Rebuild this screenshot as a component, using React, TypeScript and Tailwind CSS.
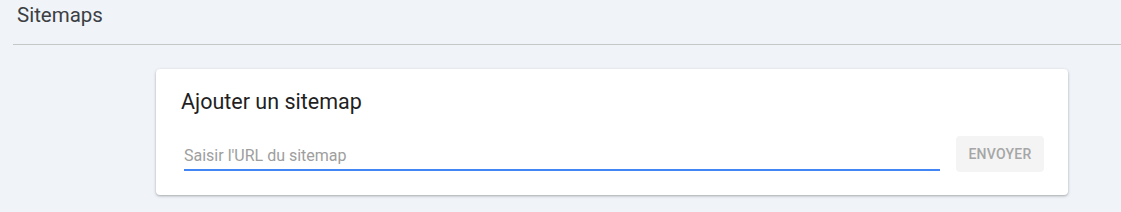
import React from "react";

export default function App() {
  return (
    <div className="w-[1121px] h-[212px] bg-[#f0f4f9] overflow-hidden" style={{ fontFamily: "Roboto, 'Noto Sans', sans-serif" }}>
      <div className="pl-[13px]">
        <div className="h-[45px] border-b border-[#c4c7c5] pl-[4px] pt-[1px]">
          <h1 className="text-[20.5px] leading-[28px] text-[#3c4043]">Sitemaps</h1>
        </div>
      </div>
      <div className="pl-[156px] pt-[24px]">
        <div className="w-[912px] h-[126px] bg-white rounded-[4px] shadow-[0_1px_3px_rgba(60,64,67,0.3),0_1px_2px_rgba(60,64,67,0.15)] pl-[25px] pr-[24px] pt-[20px]">
          <h2 className="text-[21.5px] leading-[26px] text-[#1f1f1f]">Ajouter un sitemap</h2>
          <div className="flex items-start mt-[20px]">
            <div className="ml-[3px] w-[756px] h-[34px] mt-[2px] border-b-2 border-[#4285f4] flex items-end pb-[3px]">
              <input
                className="w-full outline-none bg-transparent text-[16px] leading-[20px] text-[#202124] placeholder:text-[#9e9e9e]"
                placeholder="Saisir l'URL du sitemap"
              />
            </div>
            <button className="ml-[16px] w-[88px] h-[36px] rounded-[4px] bg-[#f4f4f4] text-[14px] font-medium tracking-[0.25px] text-[#a6a6a6] mt-[1px]">
              ENVOYER
            </button>
          </div>
        </div>
      </div>
    </div>
  );
}
